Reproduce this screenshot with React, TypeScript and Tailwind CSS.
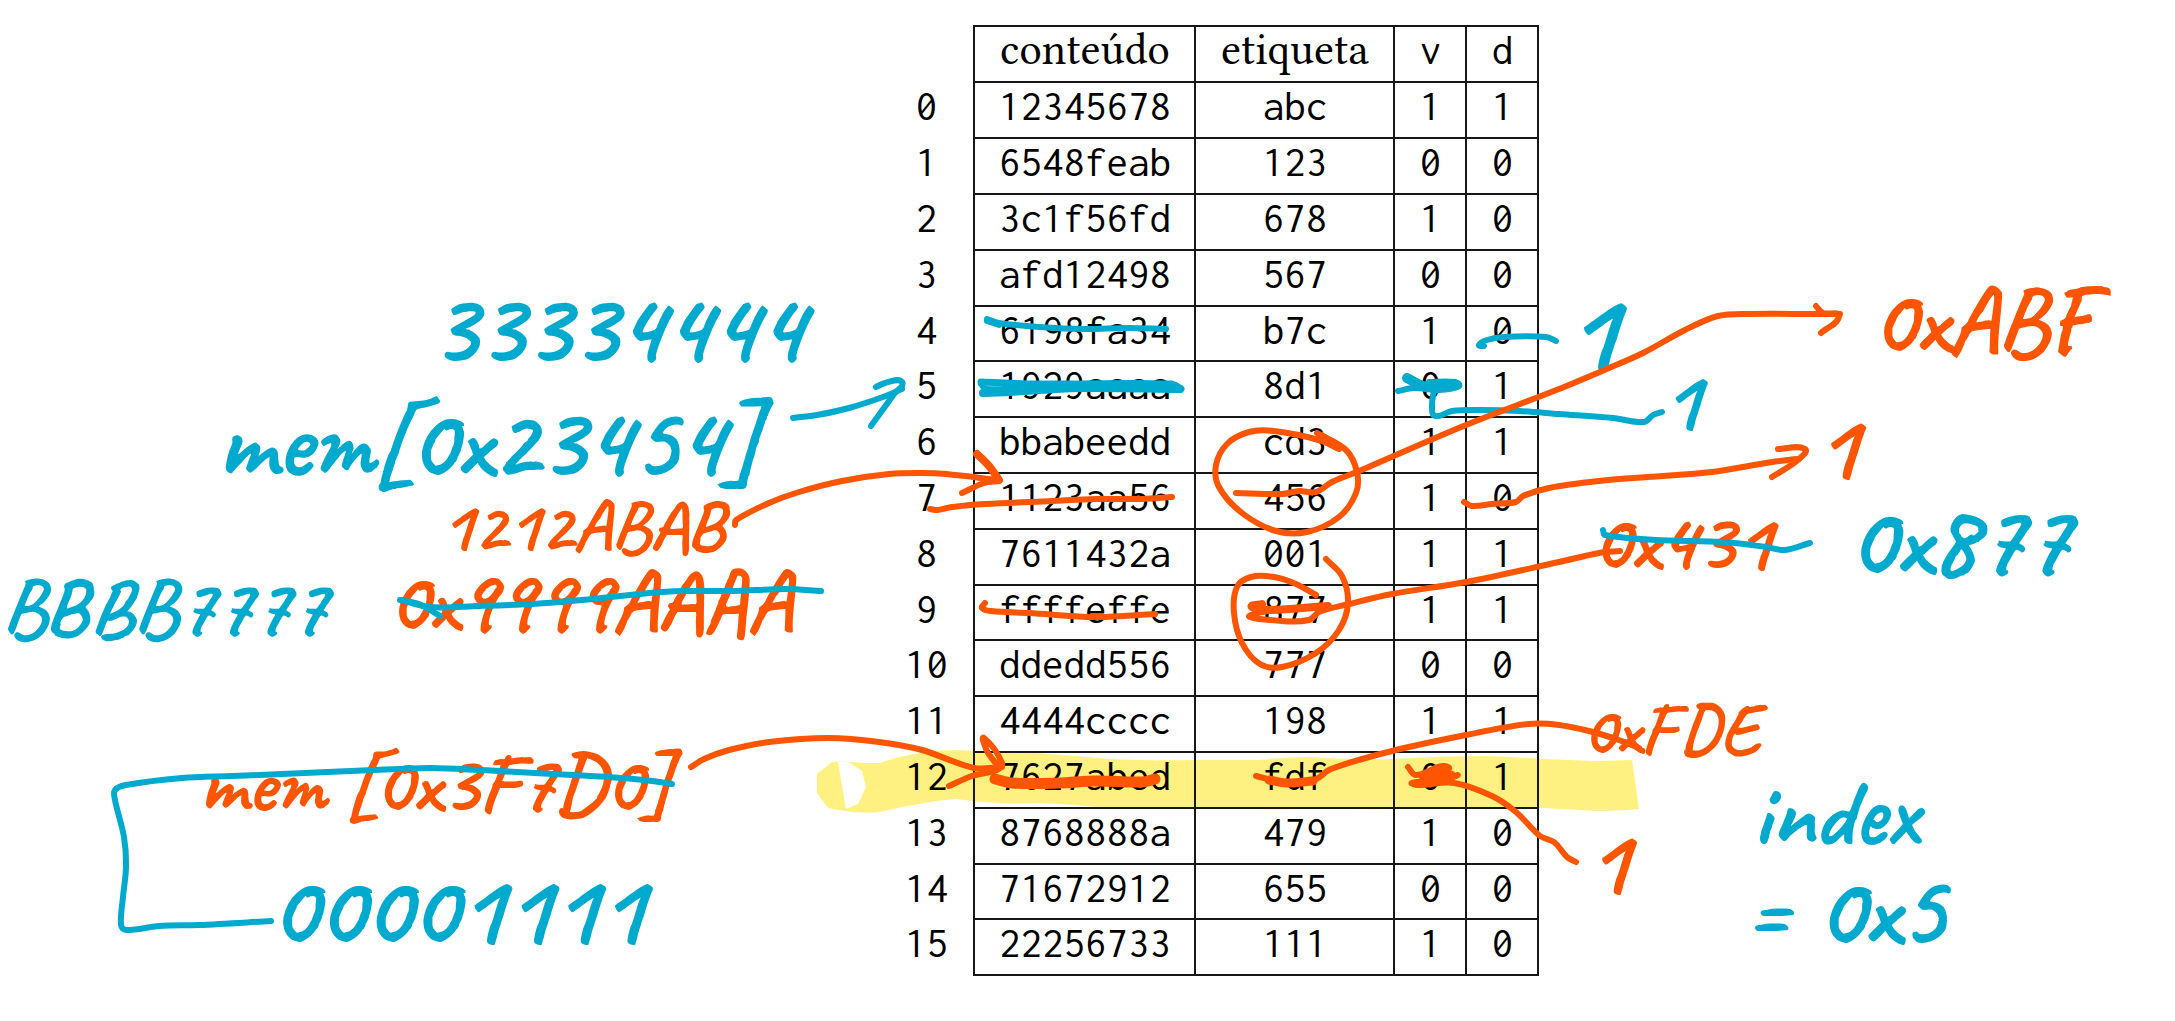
import React from "react";

type Point = [number, number];

const BLUE = "#00aacf";
const ORANGE = "#ff5500";

const rows = [
  ["12345678", "abc", "1", "1"],
  ["6548feab", "123", "0", "0"],
  ["3c1f56fd", "678", "1", "0"],
  ["afd12498", "567", "0", "0"],
  ["6198fa34", "b7c", "1", "0"],
  ["1929aaaa", "8d1", "0", "1"],
  ["bbabeedd", "cd3", "1", "1"],
  ["1123aa56", "456", "1", "0"],
  ["7611432a", "001", "1", "1"],
  ["ffffeffe", "877", "1", "1"],
  ["ddedd556", "777", "0", "0"],
  ["4444cccc", "198", "1", "1"],
  ["7627abed", "fdf", "0", "1"],
  ["8768888a", "479", "1", "0"],
  ["71672912", "655", "0", "0"],
  ["22256733", "111", "1", "0"],
];

/* Handwritten notes, each pinned to its place on the canvas. */
const notes = [
  { text: "33334444", place: "left-[430px] top-[276px] text-[104px] text-[#00aacf]" },
  { text: "mem[0x23454]", place: "left-[217px] top-[390px] text-[104px] text-[#00aacf]" },
  { text: "1212ABAB", place: "left-[440px] top-[489px] text-[74px] text-[#ff5500]" },
  { text: "0x9999AAAA", place: "left-[388px] top-[557px] text-[88px] text-[#ff5500]" },
  { text: "BBBB7777", place: "left-[2px] top-[565px] text-[84px] text-[#00aacf]" },
  { text: "mem [0x3F7D0]", place: "left-[199px] top-[741px] text-[84px] text-[#ff5500]" },
  { text: "00001111", place: "left-[270px] top-[857px] text-[104px] text-[#00aacf]" },
  { text: "1", place: "left-[1564px] top-[272px] text-[118px] text-[#00aacf]" },
  { text: "1", place: "left-[1661px] top-[356px] text-[88px] text-[#00aacf]" },
  { text: "0xABF", place: "left-[1872px] top-[273px] text-[96px] text-[#ff5500]" },
  { text: "1", place: "left-[1815px] top-[399px] text-[96px] text-[#ff5500]" },
  { text: "0x431", place: "left-[1592px] top-[499px] text-[84px] text-[#ff5500]" },
  { text: "0x877", place: "left-[1848px] top-[488px] text-[104px] text-[#00aacf]" },
  { text: "0xFDE", place: "left-[1582px] top-[692px] text-[74px] text-[#ff5500]" },
  { text: "1", place: "left-[1586px] top-[814px] text-[96px] text-[#ff5500]" },
  { text: "index", place: "left-[1752px] top-[765px] text-[96px] text-[#00aacf]" },
  { text: "= 0x5", place: "left-[1745px] top-[858px] text-[104px] text-[#00aacf]" },
];

const strokes: { color: string; width: number; points: Point[] }[] = [
  // strike through the first value of row 4
  { color: BLUE, width: 6, points: [[988, 319], [1000, 323], [1040, 327], [1085, 329], [1130, 328], [1167, 329]] },
  { color: BLUE, width: 6, points: [[988, 321], [1000, 325]] },
  // heavy strike through row 5
  { color: BLUE, width: 7, points: [[982, 382], [1040, 384], [1172, 384], [1182, 389]] },
  { color: BLUE, width: 8, points: [[984, 393], [1010, 392], [1080, 388], [1181, 389]] },
  { color: BLUE, width: 6, points: [[982, 384], [987, 389], [1020, 388]] },
  // dirty bit of row 4
  { color: BLUE, width: 6, points: [[1485, 346], [1480, 345], [1488, 340], [1505, 337], [1547, 337], [1557, 341]] },
  // valid bit of row 5 and its leader line
  { color: BLUE, width: 10, points: [[1408, 378], [1424, 386], [1435, 387], [1458, 385]] },
  { color: BLUE, width: 6, points: [[1399, 391], [1415, 388], [1440, 390], [1460, 386], [1456, 382], [1430, 382]] },
  { color: BLUE, width: 6, points: [[1435, 390], [1433, 405], [1436, 416], [1453, 411], [1483, 410], [1520, 411], [1560, 414], [1614, 418], [1645, 422], [1654, 415], [1663, 412]] },
  // arrow to row 5
  { color: BLUE, width: 6, points: [[794, 418], [818, 415], [850, 408], [884, 397], [903, 389]] },
  { color: BLUE, width: 6, points: [[877, 387], [886, 383], [903, 382], [895, 394], [872, 426]] },
  // bracket line over the lower left note
  { color: BLUE, width: 6, points: [[272, 921], [200, 925], [160, 926], [127, 930], [122, 925], [124, 897], [127, 867], [125, 837], [116, 800], [116, 790], [127, 785], [183, 778], [233, 776], [283, 774], [400, 769], [433, 768], [480, 770], [573, 775], [623, 778], [653, 781], [673, 784]] },

  // arrow to row 7
  { color: ORANGE, width: 6, points: [[736, 525], [737, 520], [770, 503], [800, 492], [843, 481], [890, 474], [923, 473], [947, 474], [999, 480]] },
  { color: ORANGE, width: 8, points: [[978, 454], [990, 466], [1000, 480]] },
  { color: ORANGE, width: 6, points: [[1000, 481], [985, 483], [963, 493]] },
  // strikes on rows 7 and 9
  { color: ORANGE, width: 6, points: [[931, 509], [939, 510], [953, 507], [987, 504], [1053, 501], [1097, 499], [1143, 499], [1173, 497]] },
  { color: ORANGE, width: 6, points: [[986, 603], [983, 608], [992, 611], [1030, 613], [1097, 617], [1156, 614]] },
  // ring around the tags of rows 6 and 7
  { color: ORANGE, width: 6, points: [[1318, 433], [1347, 450], [1358, 472], [1357, 493], [1340, 517], [1308, 532], [1277, 531], [1243, 513], [1220, 487], [1217, 465], [1228, 444], [1250, 432], [1275, 431], [1320, 440], [1340, 449]] },
  { color: ORANGE, width: 8, points: [[1322, 436], [1340, 447]] },
  // tag of row 7 and its arrow
  { color: ORANGE, width: 6, points: [[1237, 493], [1283, 494], [1300, 491], [1317, 492], [1333, 482], [1360, 471], [1467, 425], [1560, 389], [1610, 368], [1644, 353], [1686, 330], [1719, 316], [1751, 314], [1813, 314], [1841, 314]] },
  { color: ORANGE, width: 6, points: [[1817, 306], [1824, 313], [1840, 316], [1822, 333]] },
  // dirty bit of row 7 and its arrow
  { color: ORANGE, width: 6, points: [[1465, 502], [1473, 506], [1493, 504], [1517, 502], [1524, 496], [1550, 488], [1600, 481], [1648, 477], [1713, 472], [1767, 463], [1797, 459]] },
  { color: ORANGE, width: 6, points: [[1779, 449], [1806, 449], [1799, 460], [1773, 477]] },
  // ring around the tag of row 9
  { color: ORANGE, width: 6, points: [[1327, 559], [1343, 576], [1349, 603], [1340, 630], [1317, 653], [1283, 667], [1261, 664], [1243, 643], [1235, 613], [1238, 587], [1252, 577], [1275, 577], [1297, 584], [1317, 595]] },
  // tag of row 9 and its leader line
  { color: ORANGE, width: 8, points: [[1263, 604], [1253, 607], [1270, 610], [1329, 606]] },
  { color: ORANGE, width: 6, points: [[1329, 606], [1252, 615], [1283, 621], [1310, 620], [1320, 612], [1350, 604], [1393, 594], [1467, 582], [1560, 562], [1600, 553], [1621, 551]] },
  // arrow to row 12
  { color: ORANGE, width: 6, points: [[692, 767], [705, 759], [730, 750], [770, 742], [830, 738], [880, 742], [923, 750], [975, 768], [1003, 767]] },
  { color: ORANGE, width: 6, points: [[950, 786], [973, 776], [998, 770], [1003, 763], [985, 738], [988, 751], [998, 765]] },
  // heavy strike on row 12
  { color: ORANGE, width: 11, points: [[996, 779], [1013, 783], [1060, 783], [1097, 781], [1143, 782], [1156, 779]] },
  // tag of row 12 and its leader line
  { color: ORANGE, width: 9, points: [[1270, 780], [1287, 783], [1314, 781]] },
  { color: ORANGE, width: 6, points: [[1257, 776], [1285, 782], [1315, 780], [1332, 769], [1393, 751], [1467, 735], [1530, 724], [1560, 725], [1590, 731], [1620, 740], [1640, 748]] },
  // valid bit of row 12 and its leader line
  { color: ORANGE, width: 6, points: [[1409, 767], [1417, 775], [1449, 767], [1424, 778], [1457, 776], [1413, 783], [1420, 785], [1455, 783], [1493, 796], [1517, 812], [1541, 836], [1555, 842], [1568, 857], [1577, 862]] },
  { color: ORANGE, width: 9, points: [[1425, 778], [1452, 775]] },
  // blue strikes that cross orange notes
  { color: BLUE, width: 6, points: [[401, 600], [420, 604], [441, 616]] },
  { color: BLUE, width: 6, points: [[402, 600], [430, 607], [480, 606], [533, 604], [583, 600], [650, 593], [683, 591], [733, 591], [787, 589], [822, 591]] },
  { color: BLUE, width: 6, points: [[1604, 530], [1606, 535], [1656, 540], [1725, 542], [1767, 547], [1786, 550], [1811, 543]] },
];

/* Joins the points of a pen stroke with smooth cubic segments. */
function smoothPath(points: Point[]) {
  let d = `M${points[0][0]} ${points[0][1]}`;
  for (let i = 0; i < points.length - 1; i++) {
    const before = points[Math.max(i - 1, 0)];
    const from = points[i];
    const to = points[i + 1];
    const after = points[Math.min(i + 2, points.length - 1)];
    const reach = Math.hypot(to[0] - from[0], to[1] - from[1]) / 3;
    const lengthA = Math.hypot(to[0] - before[0], to[1] - before[1]) || 1;
    const lengthB = Math.hypot(after[0] - from[0], after[1] - from[1]) || 1;
    const ax = from[0] + ((to[0] - before[0]) / lengthA) * reach;
    const ay = from[1] + ((to[1] - before[1]) / lengthA) * reach;
    const bx = to[0] - ((after[0] - from[0]) / lengthB) * reach;
    const by = to[1] - ((after[1] - from[1]) / lengthB) * reach;
    d += `C${ax} ${ay} ${bx} ${by} ${to[0]} ${to[1]}`;
  }
  return d;
}

function Highlight() {
  return (
    <svg className="absolute top-0 left-0" width="2175" height="1021" viewBox="0 0 2175 1021" aria-hidden="true">
      <path
        fill="#fff181"
        d="M818 774 833 762 848 761Q853 763 880 763Q917 750 957 750Q972 750 990 754Q1010 753 1037 753Q1075 756 1113 759Q1150 761 1197 760H1260Q1285 757 1310 757Q1350 760 1393 759Q1440 756 1487 756Q1515 757 1543 759Q1570 760 1597 761L1633 760 1640 809Q1615 811 1597 811Q1570 809 1543 808H1477Q1435 808 1393 809Q1360 810 1327 808Q1290 810 1260 809H1113Q1075 804 1040 803Q1000 805 957 799Q930 801 880 812Q860 814 840 810L829 808 818 793Z"
      />
      <path fill="#ffffff" d="M839 762 848 761 863 771 867 787 859 804 847 809Z" />
    </svg>
  );
}

function Ink() {
  return (
    <svg
      className="pointer-events-none absolute top-0 left-0"
      width="2175"
      height="1021"
      viewBox="0 0 2175 1021"
      fill="none"
      strokeLinecap="round"
      strokeLinejoin="round"
      aria-hidden="true"
    >
      {strokes.map((stroke, i) => (
        <path key={i} d={smoothPath(stroke.points)} stroke={stroke.color} strokeWidth={stroke.width} />
      ))}
    </svg>
  );
}

function CacheTable() {
  const cell = "border-2 border-neutral-900 p-0 pb-2 text-center font-normal";
  return (
    <table className="relative border-collapse font-['Inconsolata','DejaVu_Sans_Mono',monospace] text-[43px] leading-[44px] text-black">
      <thead>
        <tr className="h-[56px]">
          <td className="w-[95px]" />
          <th scope="col" className={`${cell} w-[221px] font-['Libertinus_Serif','Liberation_Serif',serif] text-[45px]`}>conteúdo</th>
          <th scope="col" className={`${cell} w-[199px] font-['Libertinus_Serif','Liberation_Serif',serif] text-[45px]`}>etiqueta</th>
          <th scope="col" className={`${cell} w-[72px]`}>v</th>
          <th scope="col" className={`${cell} w-[72px]`}>d</th>
        </tr>
      </thead>
      <tbody>
        {rows.map((row, index) => (
          <tr key={index} className="h-[56px] nth-[5n]:h-[55px]">
            <th scope="row" className="p-0 pb-2 text-center font-normal">{index}</th>
            {row.map((value, column) => (
              <td key={column} className={cell}>{value}</td>
            ))}
          </tr>
        ))}
      </tbody>
    </table>
  );
}

export default function App() {
  return (
    <main className="grid min-h-screen grid-cols-[220fr_auto_159fr] items-start overflow-hidden bg-white pt-[25px] pb-[46px]">
      <div className="relative col-start-2">
        <div className="absolute -top-[25px] -left-[880px] h-[1021px] w-[2175px]">
          <Highlight />
        </div>
        <CacheTable />
        <div className="pointer-events-none absolute -top-[25px] -left-[880px] h-[1021px] w-[2175px]">
          {notes.map((note, i) => (
            <span key={i} className={`absolute font-['Caveat','Lato',sans-serif] leading-none font-semibold whitespace-pre ${note.place}`}>
              {note.text}
            </span>
          ))}
          <Ink />
        </div>
      </div>
    </main>
  );
}
